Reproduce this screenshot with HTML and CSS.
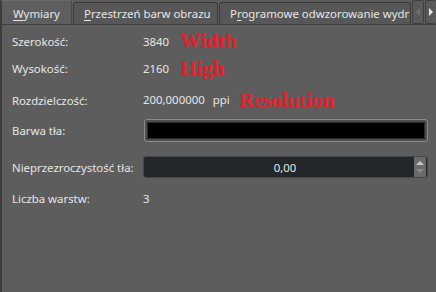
FILE: index.html
```html
<!DOCTYPE html>
<html lang="pl">
<head>
<meta charset="utf-8">
<link rel="stylesheet" href="styles.css">
</head>
<body>
<div class="dialog">
  <div class="tabs">
    <div class="tab active"><span class="ul">W</span>ymiary</div>
    <div class="tab second"><span class="ul">P</span>rzestrzeń barw obrazu</div>
    <div class="tab third">P<span class="ul">r</span>ogramowe odwzorowanie wydruku</div>
    <div class="arrow left"><svg width="6" height="8" viewBox="0 0 6 8"><path d="M5 0 L1 4 L5 8 Z" fill="#6e6e6e"/></svg></div>
    <div class="arrow right"><svg width="6" height="8" viewBox="0 0 6 8"><path d="M1 0 L5 4 L1 8 Z" fill="#e6e6e6"/></svg></div>
  </div>
  <div class="panel">
    <div class="row r1"><span class="label">Szerokość:</span><span class="value">3840<span class="note n-w">Width</span></span></div>
    <div class="row r2"><span class="label">Wysokość:</span><span class="value">2160<span class="note n-w">High</span></span></div>
    <div class="row r3"><span class="label">Rozdzielczość:</span><span class="value">200,000000<span class="unit">ppi</span><span class="note n-r">Resolution</span></span></div>
    <div class="row r4"><span class="label">Barwa tła:</span><span class="color-btn"><span class="swatch"></span></span></div>
    <div class="row r5"><span class="label">Nieprzezroczystość tła:</span><span class="spin"><span class="spin-val">0,00</span><span class="spin-btns"><svg width="12" height="20" viewBox="0 0 12 20"><path d="M2 8 L6 4 L10 8 Z" fill="#c8c8c8"/><path d="M2 12 L6 16 L10 12 Z" fill="#8a8a8a"/></svg></span></span></div>
    <div class="row r6"><span class="label">Liczba warstw:</span><span class="value">3</span></div>
  </div>
</div>
</body>
</html>
```
FILE: styles.css
```css
html, body {
  margin: 0;
  padding: 0;
  background: #5d5d5d;
}
body {
  width: 436px;
  height: 292px;
  overflow: hidden;
  font-family: "Noto Sans", "Open Sans", sans-serif;
  font-size: 11.4px;
  color: #e6e6e6;
}
.dialog {
  display: flex;
  flex-direction: column;
  height: 292px;
}
.tabs {
  display: flex;
  height: 25px;
  flex: none;
}
.tab {
  box-sizing: border-box;
  white-space: nowrap;
  overflow: hidden;
  line-height: 20px;
  flex: none;
}
.tab.active {
  width: 72px;
  height: 25px;
  padding: 3px 0 0 11px;
  background: #5e5e5e;
  border-top: 1px solid #6a6a6a;
  border-right: 1px solid #4a4a4a;
  border-left: 2px solid #3c3c3c;
  border-radius: 0 3px 0 0;
}
.tab.second, .tab.third {
  margin-top: 2px;
  height: 23px;
  padding: 1px 0 0 10px;
  background: #575757;
  border: 1px solid #3b3b3b;
  border-bottom: none;
  border-radius: 3px 3px 0 0;
  margin-left: 1px;
}
.tab.second { width: 145px; }
.tab.third { width: 192px; }
.arrow {
  box-sizing: border-box;
  width: 12px;
  height: 24px;
  margin-left: 1px;
  background: #5a5a5a;
  border: 1px solid #3f3f3f;
  border-radius: 2px;
  display: flex;
  align-items: center;
  justify-content: center;
  flex: none;
}
.arrow.right { width: 11px; border-right: none; }
.ul { text-decoration: underline; text-underline-offset: 2px; }
.panel {
  flex: 1;
  border-left: 2px solid #3c3c3c;
  border-top: 1px solid #3f3f3f;
  margin-top: -1px;
  padding: 0 8px 0 10px;
}
.row {
  display: flex;
  align-items: center;
}
.label {
  width: 131px;
  flex: none;
}
.value {
  white-space: nowrap;
}
.note {
  font-family: "Liberation Serif", "Times New Roman", serif;
  font-weight: bold;
  font-size: 21px;
  color: #e41f2b;
  vertical-align: -2px;
}
.n-w { margin-left: 11px; }
.unit { margin-left: 8px; }
.n-r { margin-left: 9px; vertical-align: -3px; }
.r1 { height: 20px; margin-top: 6px; }
.r2 { height: 20px; margin-top: 7px; }
.r3 { height: 20px; margin-top: 12px; }
.r4 { height: 23px; margin-top: 9px; }
.r5 { height: 22px; margin-top: 14px; }
.r6 { height: 20px; margin-top: 10px; }
.color-btn {
  box-sizing: border-box;
  flex: 1;
  height: 23px;
  border: 1px solid #8c8c8c;
  border-radius: 3px;
  background: #4e4e4e;
  padding: 2px;
  margin-left: 1px;
  display: flex;
}
.swatch {
  flex: 1;
  background: #000;
  border: 1px solid #2a2a2a;
}
.spin {
  box-sizing: border-box;
  flex: 1;
  height: 22px;
  background: #24272a;
  border: 1px solid #45484b;
  border-radius: 3px;
  display: flex;
  align-items: center;
}
.spin-val {
  flex: 1;
  text-align: center;
  padding-left: 12px;
}
.spin-btns {
  width: 12px;
  height: 20px;
  background: #6a6a6a;
  margin-right: 1px;
  display: flex;
}
```
